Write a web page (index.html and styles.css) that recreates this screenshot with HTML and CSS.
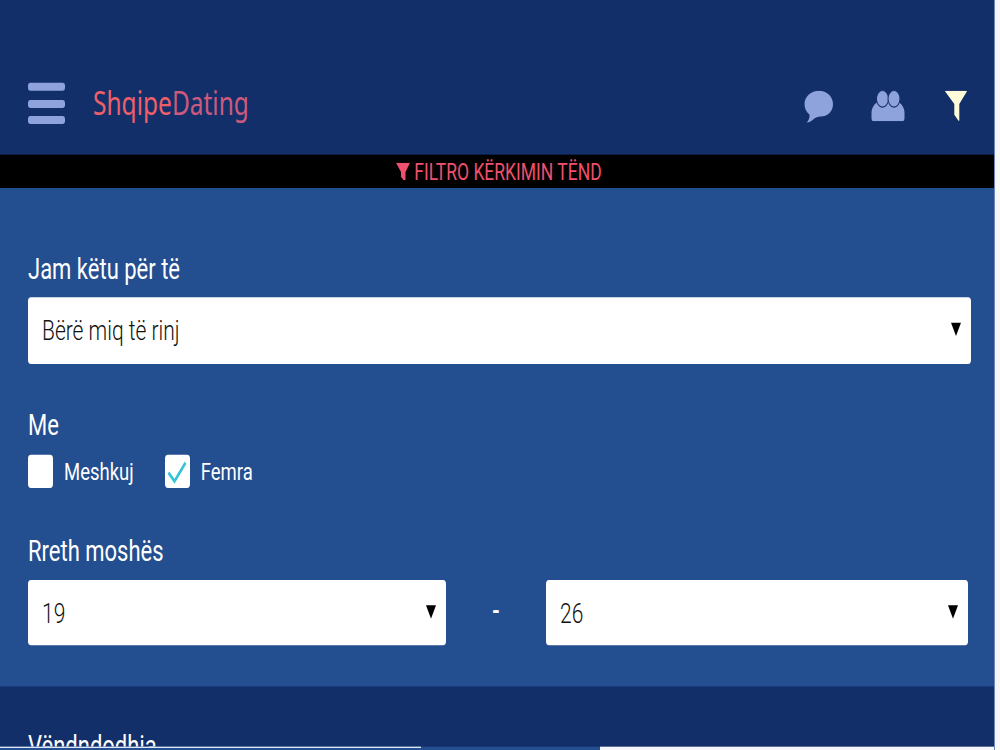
FILE: index.html
```html
<!DOCTYPE html>
<html lang="sq">
<head>
  <meta charset="UTF-8" />
  <title>ShqipeDating</title>
  <link rel="stylesheet" href="styles.css">
</head>
<body>
  <div class="page">

    <!-- Header -->
    <header class="topbar">
      <div class="burger"><span></span><span></span><span></span></div>
      <div class="logo">Shqipe<span>Dating</span></div>
      <div class="top-icons">
        <svg class="icon-chat" viewBox="0 0 29 24"><path fill="#8ea3db" d="M15 0C22.700 0 29 4.400 29 10C29 15.800 23.500 19.400 16.500 19.400C14 19.400 11.500 20 9.500 21.500C7 23.300 4.500 24 2.500 24C4.500 22.500 5.600 20.500 5.600 18C2.300 16.200 0.500 13.300 0.500 10C0.500 4.400 7.300 0 15 0Z"/></svg>
        <svg class="icon-group" viewBox="0 0 34 23"><path fill="#8ea3db" d="M3 23C1.200 23 0.500 22 0.500 20.500V17C0.500 13 3 10 7 8.500H27C31 10 33.500 13 33.500 17V20.500C33.500 22 32.800 23 31 23Z"/><ellipse fill="#8ea3db" stroke="#132f69" cx="11.500" cy="6" rx="6" ry="6.300"/><ellipse fill="#8ea3db" stroke="#132f69" cx="23" cy="6" rx="6" ry="6.300"/></svg>
        <svg class="icon-filter" viewBox="0 0 22 23"><path fill="#fffbd8" d="M0 0.500Q0 0 1 0H21Q22 0 22 0.500L14.300 10V22.500H13.500L9.300 18V10Z"/></svg>
      </div>
    </header>

    <!-- Filter title -->
    <div class="filter-title">
      <svg viewBox="0 0 14 13.500"><path fill="#f0506e" d="M0 0H14L9.500 7V13.500H8L5 10.500V7Z"/></svg>
      FILTRO KËRKIMIN TËND
    </div>

    <!-- Form -->
    <section class="filter-form">
      <label class="field-label">Jam këtu për të</label>
      <div class="select-box">
        <select><option>Bërë miq të rinj</option></select>
      </div>

      <label class="field-label label-me">Me</label>
      <div class="check-row">
        <div class="check-item">
          <span class="check-box"></span> Meshkuj
        </div>
        <div class="check-item">
          <span class="check-box">
            <svg viewBox="0 0 25 25"><path fill="none" stroke="#35c4d6" stroke-width="2.400" d="M3.500 13.500L9.500 20L20.500 6"/></svg>
          </span> Femra
        </div>
      </div>

      <label class="field-label label-age">Rreth moshës</label>
      <div class="age-row">
        <div class="select-box">
          <select><option>19</option></select>
        </div>
        <div class="dash">-</div>
        <div class="select-box">
          <select><option>26</option></select>
        </div>
      </div>
    </section>

    <section class="location">
      <label class="field-label">Vëndndodhja</label>
    </section>

    <div class="bottom-strip">
      <div class="strip-left"></div>
      <div class="strip-mid"></div>
      <div class="strip-right"></div>
    </div>
  </div>
</body>
</html>
```

FILE: styles.css
```css
html, body {
  margin: 0;
  padding: 0;
  height: 100%;
  overflow: hidden;
  background: #f7f7f7;
  font-family: 'Roboto', sans-serif;
}

/* the whole shot is stretched tall, so scale one wrapper */
.page {
  width: 994px;
  height: 562.5px;
  border-right: 1px solid #6f86b8;
  background: #132f69;
  transform: scaleY(calc(4 / 3));
  transform-origin: top left;
  overflow: hidden;
}

/* Header */
.topbar {
  display: flex;
  align-items: center;
  box-sizing: border-box;
  height: 116.25px;
  padding: 39px 27px 0 28px;
  background: #132f69;
}

.burger {
  display: flex;
  flex-direction: column;
  gap: 6.400px;
  width: 37px;
  margin-right: 28px;
}

.burger span {
  height: 6px;
  border-radius: 2px;
  background: #8ea3db;
}

.logo {
  margin-top: -2px;
  font-family: 'Noto Sans', sans-serif;
  font-size: 24.500px;
  line-height: 30px;
  color: #ee5f6a;
}

.logo span {
  color: #cc5a7c;
}

.top-icons {
  display: flex;
  align-items: center;
  margin-left: auto;
  margin-top: 4px;
}

.icon-chat {
  width: 29px;
  height: 24px;
  margin-right: 38px;
}

.icon-group {
  width: 34px;
  height: 23px;
  margin-right: 40px;
}

.icon-filter {
  width: 22px;
  height: 23px;
}

/* Filter title */
.filter-title {
  display: flex;
  align-items: center;
  justify-content: center;
  gap: 4px;
  height: 24.750px;
  padding-left: 4px;
  background: #000;
  color: #f0506e;
  font-size: 17.500px;
}

.filter-title svg {
  width: 14px;
  height: 13.500px;
}

/* Form */
.filter-form {
  box-sizing: border-box;
  height: 374.250px;
  padding: 47px 23px 31px 28px;
  background: #234e8f;
}

.field-label {
  display: block;
  height: 28px;
  margin-bottom: 7px;
  font-size: 22px;
  font-weight: 400;
  line-height: 28px;
  color: #fff;
}

.select-box {
  position: relative;
  height: 49.500px;
}

.select-box::after {
  content: "";
  position: absolute;
  top: 19px;
  right: 10.500px;
  border-left: 5px solid transparent;
  border-right: 5px solid transparent;
  border-top: 10px solid #000;
}

.select-box select {
  appearance: none;
  display: block;
  box-sizing: border-box;
  width: 100%;
  height: 100%;
  padding: 1px 14px 0 14px;
  border: none;
  border-radius: 3px;
  background: #fff;
  font-family: 'Roboto', sans-serif;
  font-size: 21px;
  font-weight: 300;
  color: #111;
}

.label-me {
  margin-top: 32.500px;
  margin-bottom: 8px;
}

.check-row {
  display: flex;
  gap: 31px;
}

.check-item {
  display: flex;
  align-items: center;
  gap: 11px;
  font-size: 18.500px;
  font-weight: 400;
  color: #fff;
}

.check-box {
  display: block;
  width: 25px;
  height: 25px;
  border-radius: 3px;
  background: #fff;
}

.check-box svg {
  display: block;
  width: 25px;
  height: 25px;
}

.label-age {
  margin-top: 33.750px;
  margin-bottom: 7.250px;
}

.age-row {
  display: grid;
  grid-template-columns: 418px 1fr 422px;
  width: 940px;
}

.age-row .select-box {
  height: 48.750px;
}

.dash {
  text-align: center;
  font-size: 20px;
  font-weight: 700;
  line-height: 46px;
  color: #fff;
}

/* Next section, cut by the window */
.location {
  box-sizing: border-box;
  height: 45px;
  padding: 31px 0 0 28px;
  background: #132f69;
  overflow: hidden;
}

.bottom-strip {
  display: flex;
  height: 2.250px;
}

.strip-left {
  width: 421px;
  background: #234e8f;
  border-top: 1px solid #dfe6f5;
  box-sizing: border-box;
}

.strip-mid {
  width: 179px;
  background: #234e8f;
}

.strip-right {
  flex: 1;
  background: #f4f6fb;
}
```
